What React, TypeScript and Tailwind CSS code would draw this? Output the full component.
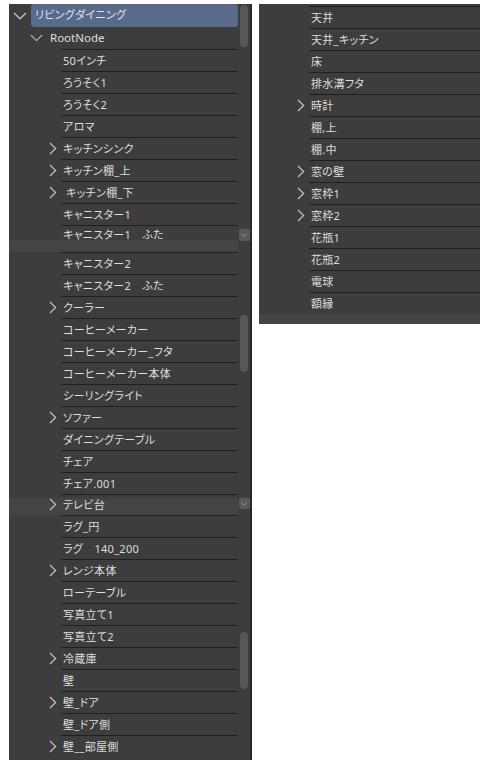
import clsx from "clsx";

type Item = { label: string; child?: boolean; kind?: "band1" | "band2" };

const leftItems: Item[] = [
  { label: "50インチ" },
  { label: "ろうそく1" },
  { label: "ろうそく2" },
  { label: "アロマ" },
  { label: "キッチンシンク", child: true },
  { label: "キッチン棚_上", child: true },
  { label: " キッチン棚_下", child: true },
  { label: "キャニスター1" },
  { label: "キャニスター1　ふた", kind: "band1" },
  { label: "キャニスター2" },
  { label: "キャニスター2　ふた" },
  { label: "クーラー", child: true },
  { label: "コーヒーメーカー" },
  { label: "コーヒーメーカー_フタ" },
  { label: "コーヒーメーカー本体" },
  { label: "シーリングライト" },
  { label: "ソファー", child: true },
  { label: "ダイニングテーブル" },
  { label: "チェア" },
  { label: "チェア.001" },
  { label: "テレビ台", child: true, kind: "band2" },
  { label: "ラグ_円" },
  { label: "ラグ　140_200" },
  { label: "レンジ本体", child: true },
  { label: "ローテーブル" },
  { label: "写真立て1" },
  { label: "写真立て2" },
  { label: "冷蔵庫", child: true },
  { label: "壁" },
  { label: "壁_ドア", child: true },
  { label: "壁_ドア側" },
  { label: "壁__部屋側", child: true },
];

const rightItems: Item[] = [
  { label: "天井" },
  { label: "天井_キッチン" },
  { label: "床" },
  { label: "排水溝フタ" },
  { label: "時計", child: true },
  { label: "棚,上" },
  { label: "棚.中" },
  { label: "窓の壁", child: true },
  { label: "窓枠1", child: true },
  { label: "窓枠2", child: true },
  { label: "花瓶1" },
  { label: "花瓶2" },
  { label: "電球" },
  { label: "額縁" },
];

function ChevronRight() {
  return (
    <svg width="8" height="13" viewBox="0 0 8 13">
      <path d="M1 1 L6.6 6.5 L1 12" fill="none" stroke="#c4c4c4" strokeWidth="1.2" />
    </svg>
  );
}

function ChevronDown({ w = 14 }: { w?: number }) {
  return (
    <svg width={w} height="8" viewBox="0 0 14 8">
      <path d="M1 1 L7 6.8 L13 1" fill="none" stroke="#c4c4c4" strokeWidth="1.2" />
    </svg>
  );
}

// ligne d'un objet enfant dans l'outliner
function Row({ item, indent }: { item: Item; indent: string }) {
  return (
    <div
      className={clsx(
        "flex",
        item.kind === "band1"
          ? "h-[27px] bg-[linear-gradient(to_bottom,transparent_15px,#444444_15px)]"
          : item.kind === "band2"
            ? "h-[21px] bg-[linear-gradient(to_bottom,transparent_4px,#444444_4px)]"
            : "h-[22px]"
      )}
    >
      <div className={clsx("shrink-0", indent)} />
      <div className="flex w-[16px] shrink-0 items-center justify-center">
        {item.child && <ChevronRight />}
      </div>
      <div
        className={clsx(
          "flex min-w-0 flex-1 border-t border-[#1f1f1f] pl-[2px] whitespace-pre",
          item.kind === "band1" ? "items-start pt-[2px]" : "items-center"
        )}
      >
        <span className="leading-[14px]">{item.label}</span>
      </div>
    </div>
  );
}

export default function App() {
  return (
    <div
      className="flex h-[766px] w-[489px] items-start gap-[7px] bg-white pt-[4px] pl-[9px] text-[11px] tracking-[0.3px] text-[#dedede] [font-feature-settings:'palt']"
      style={{ fontFamily: '"Noto Sans", "Noto Sans CJK JP", sans-serif' }}
    >
      {/* Panneau gauche */}
      <div className="relative flex h-[756px] w-[243px] shrink-0 flex-col overflow-hidden border-r-2 border-[#2a2a2a] bg-[#3d3d3d] pr-[12px]">
        <div className="flex h-[23px]">
          <div className="flex w-[22px] shrink-0 items-center justify-center">
            <ChevronDown />
          </div>
          <div className="flex flex-1 items-center rounded-[3px] bg-[#5a6a89] pl-[4px] text-[#dde6f4]">
            リビングダイニング
          </div>
        </div>
        <div className="flex h-[22px]">
          <div className="w-[18px] shrink-0" />
          <div className="flex w-[18px] shrink-0 items-center justify-center">
            <ChevronDown w={13} />
          </div>
          <div className="flex items-center pl-[5px] text-[11.5px] tracking-normal">RootNode</div>
        </div>
        {leftItems.map((it, i) => (
          <Row key={i} item={it} indent="w-[36px]" />
        ))}

        {/* barre de défilement */}
        <div className="absolute inset-y-0 right-0 flex w-[12px] flex-col items-center">
          <div className="mt-[1px] h-[42px] w-[8px] rounded-full bg-[#575757]" />
          <div className="mt-[182px] flex h-[12px] w-[11px] items-center justify-center rounded-[2px] bg-[#5a5a5a]">
            <ChevronDown w={6} />
          </div>
          <div className="mt-[74px] h-[57px] w-[8px] rounded-full bg-[#575757]" />
          <div className="mt-[126px] flex h-[11px] w-[11px] items-center justify-center rounded-[2px] bg-[#5a5a5a]">
            <ChevronDown w={6} />
          </div>
          <div className="mt-[123px] h-[57px] w-[8px] rounded-full bg-[#575757]" />
        </div>
      </div>

      {/* Panneau droit */}
      <div className="flex h-[320px] w-[221px] shrink-0 flex-col bg-[#3d3d3d] pt-[2px]">
        {rightItems.map((it, i) => (
          <Row key={i} item={it} indent="w-[34px]" />
        ))}
        <div className="mt-auto h-[10px] bg-[#444444]" />
      </div>
    </div>
  );
}
